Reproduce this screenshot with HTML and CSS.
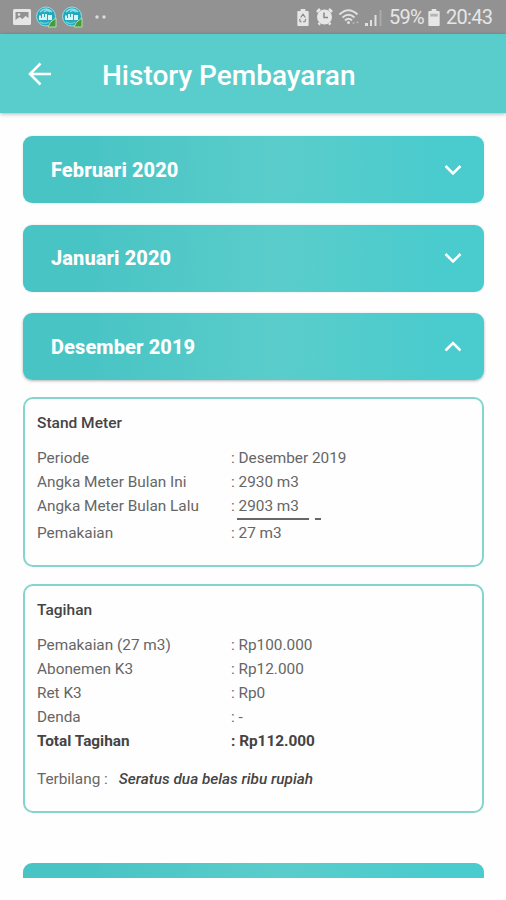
FILE: index.html
```html
<!DOCTYPE html>
<html lang="id">
<head>
    <meta charset="UTF-8">
    <meta name="viewport" content="width=device-width, initial-scale=1.0">
    <title>History Pembayaran</title>
    <link rel="stylesheet" href="styles.css">
</head>
<body>

    <div class="status-bar">
        <div class="notifications">
            <svg class="icon-picture" width="18" height="16" viewBox="0 0 18 16">
                <path fill="#e6e6e6" fill-rule="evenodd" d="M1.500 0h15A1.500 1.500 0 0 1 18 1.500v13a1.500 1.500 0 0 1-1.500 1.500h-15A1.500 1.500 0 0 1 0 14.500v-13A1.500 1.500 0 0 1 1.500 0zM2.500 3v8l4-3 3 2 3-3 3 2V3z"/>
                <circle cx="6" cy="5.500" r="1.300" fill="#e6e6e6"/>
            </svg>
            <svg class="icon-app" width="21" height="22" viewBox="0 0 21 22">
                <circle cx="10" cy="10.500" r="9.500" fill="#22a9c0" stroke="#9bdadd" stroke-width="1"/>
                <path d="M4 6q6-6 12 0M8 6q3-3 6 0" fill="none" stroke="#8fe0e8" stroke-width="1.300"/>
                <path d="M3 14V9.500h2V12h1V8h2v3h1V8h2v6zM12 9h4v5h-4z" fill="#d8f3f3"/>
                <path d="M4 16q5 3 9 0" fill="none" stroke="#62cbd4" stroke-width="1.500"/>
                <path d="M20 12v9h-8q1-5 8-9z" fill="#3f9c45" stroke="#b9dd9d" stroke-width="1"/>
            </svg>
            <svg class="icon-app" width="21" height="22" viewBox="0 0 21 22">
                <circle cx="10" cy="10.500" r="9.500" fill="#22a9c0" stroke="#9bdadd" stroke-width="1"/>
                <path d="M4 6q6-6 12 0M8 6q3-3 6 0" fill="none" stroke="#8fe0e8" stroke-width="1.300"/>
                <path d="M3 14V9.500h2V12h1V8h2v3h1V8h2v6zM12 9h4v5h-4z" fill="#d8f3f3"/>
                <path d="M4 16q5 3 9 0" fill="none" stroke="#62cbd4" stroke-width="1.500"/>
                <path d="M20 12v9h-8q1-5 8-9z" fill="#3f9c45" stroke="#b9dd9d" stroke-width="1"/>
            </svg>
            <svg class="icon-more" width="12" height="4" viewBox="0 0 12 4">
                <circle cx="2" cy="2" r="1.700" fill="#dcdcdc"/>
                <circle cx="9" cy="2" r="1.700" fill="#dcdcdc"/>
            </svg>
        </div>
        <div class="system">
            <svg width="12" height="17" viewBox="0 0 12 18">
                <path fill="#e6e6e6" d="M3.500 0h5v2H11a1 1 0 0 1 1 1v14a1 1 0 0 1-1 1H1a1 1 0 0 1-1-1V3a1 1 0 0 1 1-1h2.500z"/>
                <path d="M3.500 9L6 5.500 8.500 9M9 10.500l-1 3H6M4.500 13.500H3l-.5-3" fill="none" stroke="#888" stroke-width="1.300"/>
            </svg>
            <svg class="icon-alarm" width="17" height="18" viewBox="0 0 17 18">
                <circle cx="8.500" cy="9" r="7.500" fill="#e6e6e6"/>
                <path d="M1 4l3-3M16 4l-3-3M2.500 16.500L4 15M14.500 16.500L13 15" stroke="#e6e6e6" stroke-width="2.500"/>
                <path d="M8 4.500V9.500h4" fill="none" stroke="#888" stroke-width="1.500"/>
            </svg>
            <svg class="icon-wifi" width="22" height="17" viewBox="0 0 22 17">
                <path d="M.5 5.500q9-8.500 18 0M3.500 8.500q6-5.500 12 0M6 11.500q3.500-3.500 7 0" fill="none" stroke="#e0e0e0" stroke-width="2"/>
                <circle cx="9.500" cy="13.500" r="1.500" fill="#e0e0e0"/>
                <path d="M13 13.500l1.500 2 1.500-2zM17 14l1.500-2 1.500 2z" fill="#bbb"/>
            </svg>
            <svg class="icon-signal" width="18" height="17" viewBox="0 0 18 17">
                <path d="M0 14h3v3H0zM5 11h2v6H5zM9.500 6h2v11h-2z" fill="#e0e0e0"/>
                <path d="M14.500 1h2v16h-2z" fill="#aaa"/>
            </svg>
            <span class="percent">59%</span>
            <svg class="icon-battery" width="12" height="17" viewBox="0 0 12 18">
                <path fill="#e6e6e6" d="M3.500 0h5v2H11a1 1 0 0 1 1 1v14a1 1 0 0 1-1 1H1a1 1 0 0 1-1-1V3a1 1 0 0 1 1-1h2.500z"/>
                <path fill="#b4b4b4" d="M2 5h8v3H2z"/>
            </svg>
            <span class="clock">20:43</span>
        </div>
    </div>

    <header class="app-bar">
        <svg class="back" width="24" height="24" viewBox="0 0 24 24">
            <path d="M23 12H2M12.500 1.500L2 12l10.500 10.500" fill="none" stroke="#fff" stroke-width="2.500"/>
        </svg>
        <h1>History Pembayaran</h1>
    </header>

    <main class="history">
        <div class="month">
            <span>Februari 2020</span>
            <svg width="18" height="12" viewBox="0 0 18 12">
                <path d="M1.500 2L9 9.500 16.500 2" fill="none" stroke="#fff" stroke-width="2.500"/>
            </svg>
        </div>
        <div class="month">
            <span>Januari 2020</span>
            <svg width="18" height="12" viewBox="0 0 18 12">
                <path d="M1.500 2L9 9.500 16.500 2" fill="none" stroke="#fff" stroke-width="2.500"/>
            </svg>
        </div>
        <div class="month open">
            <span>Desember 2019</span>
            <svg width="18" height="12" viewBox="0 0 18 12">
                <path d="M1.500 9.500L9 2 16.500 9.500" fill="none" stroke="#fff" stroke-width="2.500"/>
            </svg>
        </div>

        <section class="panel meter">
            <h2>Stand Meter</h2>
            <div class="row"><span>Periode</span><span>: Desember 2019</span></div>
            <div class="row"><span>Angka Meter Bulan Ini</span><span>: 2930 m3</span></div>
            <div class="row"><span>Angka Meter Bulan Lalu</span><span>: 2903 m3</span></div>
            <div class="subtract"><i class="line"></i><i class="minus"></i></div>
            <div class="row"><span>Pemakaian</span><span>: 27 m3</span></div>
        </section>

        <section class="panel bill">
            <h2>Tagihan</h2>
            <div class="row"><span>Pemakaian (27 m3)</span><span>: Rp100.000</span></div>
            <div class="row"><span>Abonemen K3</span><span>: Rp12.000</span></div>
            <div class="row"><span>Ret K3</span><span>: Rp0</span></div>
            <div class="row"><span>Denda</span><span>: -</span></div>
            <div class="row total"><span>Total Tagihan</span><span>: Rp112.000</span></div>
            <div class="words"><span>Terbilang :</span><em>Seratus dua belas ribu rupiah</em></div>
        </section>

        <div class="next-month"></div>
    </main>

</body>
</html>
```
FILE: styles.css
```css
* {
    box-sizing: border-box;
}
body {
    margin: 0;
    height: 900px;
    overflow: hidden;
    background: #fefefe;
    font-family: Roboto, sans-serif;
    color: #666;
}
svg {
    display: block;
    flex: none;
}
.status-bar {
    height: 34px;
    padding: 0 13px;
    background: #929292;
    display: flex;
    justify-content: space-between;
    align-items: center;
}
.notifications, .system {
    display: flex;
    align-items: center;
}
.icon-app {
    margin-left: 5px;
}
.icon-more {
    margin-left: 12px;
}
.system {
    color: #e6e6e6;
    font-size: 20px;
    letter-spacing: -0.7px;
}
.icon-alarm {
    margin-left: 7px;
}
.icon-wifi {
    margin-left: 6px;
}
.icon-signal {
    margin-left: 4px;
}
.percent {
    width: 35px;
    margin-left: 6px;
    white-space: nowrap;
}
.icon-battery {
    margin-left: 4px;
}
.clock {
    width: 47px;
    margin-left: 6px;
}
.app-bar {
    height: 79px;
    padding-left: 28px;
    display: flex;
    align-items: center;
    background: #59cdcb;
    box-shadow: 0 1px 4px rgba(0, 0, 0, 0.3);
}
.app-bar h1 {
    margin: 3px 0 0 50px;
    font-size: 28px;
    font-weight: 500;
    color: white;
}
.history {
    padding: 23px 22px 0 23px;
}
.month {
    height: 67px;
    margin-bottom: 21.500px;
    padding: 0 22px 0 28px;
    display: flex;
    align-items: center;
    justify-content: space-between;
    border-radius: 9px;
    background: linear-gradient(93deg, #49c4c4 15%, #5acdcb 55%, #4acbcd 90%);
    box-shadow: 0 0 2px rgba(0, 0, 0, 0.15);
    color: white;
    font-size: 20px;
    font-weight: 800;
    letter-spacing: 0.1px;
}
.month.open {
    margin-bottom: 17px;
    box-shadow: 0 1px 3px rgba(0, 0, 0, 0.3);
}
.panel {
    padding: 14px 12px 0;
    border: 2px solid #83d5ce;
    border-radius: 10px;
    font-size: 15.350px;
}
.panel h2 {
    margin: 0 0 12px;
    font-size: 15.500px;
    line-height: 21px;
    font-weight: 500;
    color: #444;
}
.meter {
    height: 170px;
    margin-bottom: 17px;
}
.bill {
    height: 229px;
}
.row {
    display: grid;
    grid-template-columns: 194px 1fr;
    line-height: 24px;
}
.subtract {
    height: 3px;
    padding-left: 200px;
    display: flex;
    gap: 6px;
}
.line, .minus {
    height: 1.500px;
    background: #666;
}
.line {
    width: 72px;
}
.minus {
    width: 6px;
}
.total {
    font-weight: bold;
    color: #444;
}
.words {
    margin-top: 14px;
    line-height: 24px;
}
.words em {
    margin-left: 11px;
    font-weight: 500;
    color: #444;
}
.next-month {
    height: 15px;
    margin-top: 50px;
    border-radius: 9px 9px 0 0;
    background: linear-gradient(93deg, #49c4c4 15%, #5acdcb 55%, #4acbcd 90%);
}
```
